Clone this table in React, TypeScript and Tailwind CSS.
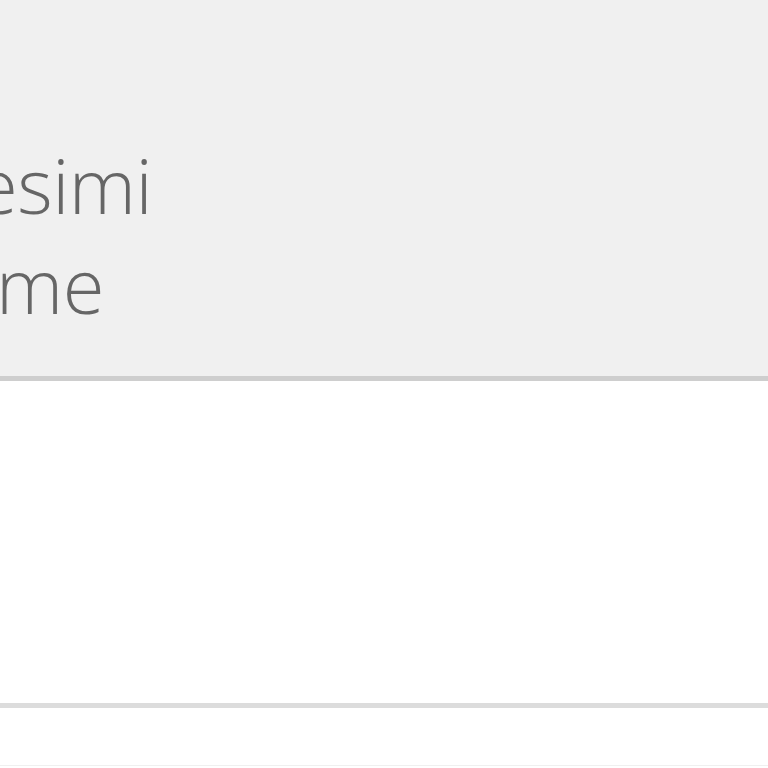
export default function App() {
  return (
    <div className="w-[768px] h-[768px] overflow-hidden bg-white">
      <div className="h-[381px] bg-[#f0f0f0] border-b-[5px] border-[#cecece] overflow-hidden">
        <div
          className="pt-[135px] text-[76px] leading-[100px] font-light text-[#666666] tracking-[-0.5px]"
          style={{ fontFamily: "'Open Sans', sans-serif" }}
        >
          <div className="-ml-[24px] whitespace-nowrap">esimi</div>
          <div className="-ml-[4px] whitespace-nowrap">me</div>
        </div>
      </div>
      <div className="h-[327px] bg-white border-b-[5px] border-[#dcdcdc]" />
      <div className="h-[58px] bg-white border-b border-[#f0f0f0]" />
    </div>
  );
}
